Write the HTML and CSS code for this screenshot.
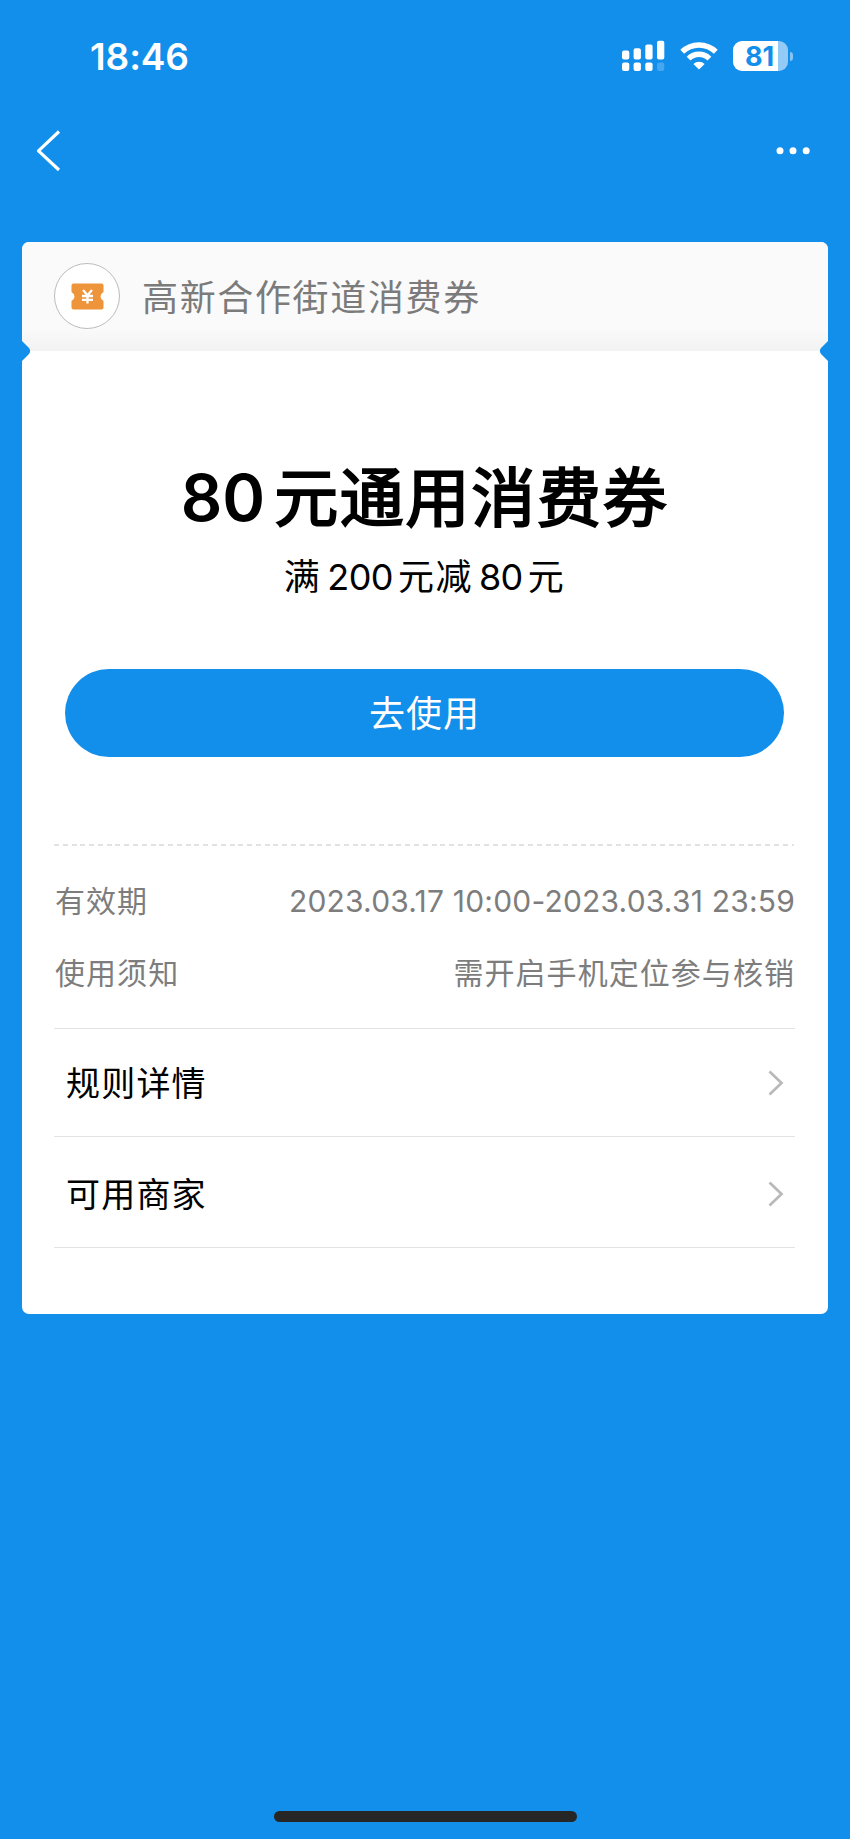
FILE: index.html
```html
<!DOCTYPE html>
<html lang="zh-CN">
<head>
<meta charset="utf-8">
<title>消费券</title>
<link rel="stylesheet" href="styles.css">
</head>
<body>
<div class="screen">
  <header class="status-bar">
    <span class="time">18:46</span>
    <div class="indicators">
      <svg class="signal" width="44" height="32" viewBox="0 0 44 32" fill="#fff">
        <rect x="0" y="10.5" width="7.3" height="9" rx="2"/>
        <rect x="11.6" y="8.3" width="7.3" height="11.2" rx="2"/>
        <rect x="23.3" y="4.6" width="7.3" height="14.9" rx="2"/>
        <rect x="35" y="0.8" width="7.3" height="18.7" rx="2"/>
        <rect x="0" y="22.5" width="7.3" height="8.4" rx="2"/>
        <rect x="11.6" y="22.5" width="7.3" height="8.4" rx="2"/>
        <rect x="23.3" y="22.5" width="7.3" height="8.4" rx="2"/>
        <rect x="35" y="22.5" width="7.3" height="8.4" rx="2" opacity=".22"/>
      </svg>
      <svg class="wifi" width="38" height="28" viewBox="0 0 38 28">
        <g fill="none" stroke="#fff" stroke-width="5.4">
          <path d="M2.200 9.8a24 24 0 0 1 33.600 0"/>
          <path d="M8.6 16.6a14.7 14.7 0 0 1 20.8 0"/>
        </g>
        <path d="M13.4 22a8 8 0 0 1 11.2 0L19 27.600z" fill="#fff"/>
      </svg>
      <div class="battery">
        <div class="battery-body"><span class="battery-level">81</span></div>
        <div class="battery-tip"></div>
      </div>
    </div>
  </header>

  <nav class="nav-bar">
    <svg width="26" height="42" viewBox="0 0 26 42" fill="none" stroke="#fff" stroke-width="3.2"><path d="M24 1.500L3.500 20.800l20.500 19.2" stroke-linejoin="round"/></svg>
    <svg width="36" height="10" viewBox="0 0 36 10" fill="#fff"><circle cx="5" cy="4.800" r="3.5"/><circle cx="18" cy="4.800" r="3.5"/><circle cx="31.2" cy="4.800" r="3.5"/></svg>
  </nav>

  <main class="card">
    <section class="card-head">
      <span class="badge">
        <svg width="33" height="27" viewBox="0 0 33 27">
          <path d="M2.500.5h28q2 0 2 2V9q-3 1.800-3 4.500t3 4.500v6.500q0 2-2 2h-28q-2 0-2-2V18q3-1.800 3-4.500T.5 9V2.500q0-2 2-2z" fill="#ee943a"/>
          <path d="M12 7l4.500 5.200L21 7M16.500 12v8.500M11 13h11M11 16.800h11" fill="none" stroke="#fff" stroke-width="2.300"/>
        </svg>
      </span>
      <span class="merchant">高新合作街道消费券</span>
    </section>

    <section class="card-body">
      <h1 class="title"><span class="title-num">80</span>元通用消费券</h1>
      <p class="subtitle">满<span class="sub-num">200</span>元减<span class="sub-num">80</span>元</p>
      <button class="use-btn">去使用</button>
      <div class="dashed"></div>
      <dl class="facts">
        <div class="fact"><dt>有效期</dt><dd class="date">2023.03.17 10:00-2023.03.31 23:59</dd></div>
        <div class="fact"><dt>使用须知</dt><dd>需开启手机定位参与核销</dd></div>
      </dl>
      <ul class="links">
        <li class="link first"><span>规则详情</span><svg width="16" height="26" viewBox="0 0 16 26"><path d="M1.500 1.500L13.500 13l-12 11.500" fill="none" stroke="#b9b9b9" stroke-width="2.700"/></svg></li>
        <li class="link second"><span>可用商家</span><svg width="16" height="26" viewBox="0 0 16 26"><path d="M1.500 1.500L13.500 13l-12 11.500" fill="none" stroke="#b9b9b9" stroke-width="2.700"/></svg></li>
      </ul>
    </section>
    <svg class="notch notch-left" width="9" height="20" viewBox="0 0 9 20"><path d="M0 0l7 7q2.200 3 0 6l-7 7z" fill="#128eeb"/></svg>
    <svg class="notch notch-right" width="9" height="20" viewBox="0 0 9 20"><path d="M9 0l-7 7q-2.200 3 0 6l7 7z" fill="#128eeb"/></svg>
  </main>

  <footer class="home"><div class="home-indicator"></div></footer>
</div>
</body>
</html>
```

FILE: styles.css
```css
* { box-sizing: border-box; }

body {
  margin: 0;
  background: #128eeb;
  font-family: Inter, "Noto Sans CJK SC", sans-serif;
  color: #000;
}

.screen {
  display: flex;
  flex-direction: column;
  width: 850px;
  height: 1839px;
  overflow: hidden;
}

.status-bar {
  display: flex;
  align-items: center;
  justify-content: space-between;
  height: 112px;
  padding: 0 57px 0 90px;
  color: #fff;
}

.time {
  padding-top: 2px;
  font-size: 37px;
  font-weight: 600;
  line-height: 44px;
  letter-spacing: -0.1px;
}

.indicators { display: flex; align-items: center; }
.signal { margin-right: 14px; }
.wifi { margin-right: 15px; }
.battery { display: flex; align-items: center; gap: 1.5px; }

.battery-body {
  width: 55px;
  height: 30px;
  padding-right: 2px;
  border-radius: 9px;
  background: linear-gradient(90deg, #fff 44.500px, #93caf6 44.500px);
  text-align: center;
}

.battery-level {
  display: block;
  font-size: 27px;
  font-weight: 700;
  line-height: 32px;
  color: #128eeb;
}

.battery-tip {
  width: 3.500px;
  height: 9px;
  border-radius: 0 4px 4px 0;
  background: #86c4f4;
}

.nav-bar {
  display: flex;
  align-items: center;
  justify-content: space-between;
  height: 77px;
  padding: 0 39px 0 35px;
  margin-bottom: 53px;
}

.card {
  position: relative;
  height: 1072px;
  margin: 0 22px;
  border-radius: 7px;
  background: #fff;
}

.card-head {
  display: flex;
  align-items: center;
  gap: 22px;
  height: 109px;
  padding: 0 0 1px 32px;
  border-radius: 7px 7px 0 0;
  background: linear-gradient(#fafafa 80%, #f2f2f2);
}

.badge {
  display: flex;
  align-items: center;
  justify-content: center;
  width: 66px;
  height: 66px;
  border: 1px solid #bcbcbc;
  border-radius: 50%;
  background: #fff;
}

.merchant {
  padding-top: 3px;
  font-size: 36px;
  line-height: 52px;
  letter-spacing: 1.650px;
  color: #7b7b7b;
}

.notch { position: absolute; top: 99px; }
.notch-left { left: 0; }
.notch-right { right: 0; }

.card-body { padding: 107px 33px 0 32px; }

.title {
  margin: 0;
  font-size: 64px;
  font-weight: 400;
  line-height: 80px;
  letter-spacing: 1.700px;
  text-align: center;
  white-space: nowrap;
  -webkit-text-stroke: 2px #000;
}

.title-num {
  margin-right: 9px;
  font-size: 65px;
  font-weight: 600;
  letter-spacing: 0;
  -webkit-text-stroke: 0;
}

.subtitle {
  margin: 17px 0 0;
  font-size: 36px;
  line-height: 44px;
  letter-spacing: 1.500px;
  text-align: center;
}

.sub-num { margin: 0 5px 0 6px; letter-spacing: -0.6px; }

.use-btn {
  display: block;
  width: 719px;
  height: 88px;
  margin: 70px 0 0 11px;
  padding: 2px 0 0;
  border: 0;
  border-radius: 44px;
  background: #128eeb;
  color: #fff;
  font-family: inherit;
  font-size: 36px;
  line-height: 86px;
  letter-spacing: 1px;
}

.dashed {
  height: 2px;
  margin: 87px 1px 0 0;
  background: repeating-linear-gradient(90deg, #e2e2e2 0 5px, transparent 5px 8.780px);
}

.facts {
  display: grid;
  gap: 28px;
  height: 182px;
  margin: 0;
  padding-top: 33px;
  align-content: start;
}

.fact {
  display: flex;
  justify-content: space-between;
  align-items: center;
  height: 44px;
  padding-left: 1px;
  font-size: 30px;
  line-height: 44px;
  letter-spacing: 1.050px;
  color: #7d7d7d;
}

.fact dd { margin: 0; }
.fact .date { letter-spacing: 0.200px; }

.links { margin: 0; padding: 0; list-style: none; border-top: 1px solid #e3e3e3; }

.link {
  display: flex;
  align-items: center;
  justify-content: space-between;
  height: 111px;
  padding: 0 11px 0 12px;
  border-bottom: 1px solid #e3e3e3;
  font-size: 34px;
  letter-spacing: 1.200px;
}

.link.first { height: 108px; }
.link.first span { padding-bottom: 2px; }
.link.second svg { margin-top: 3px; }

.home { display: flex; justify-content: center; margin-top: auto; padding-bottom: 17px; }
.home-indicator { width: 303px; height: 11px; border-radius: 6px; background: #262626; }
```
